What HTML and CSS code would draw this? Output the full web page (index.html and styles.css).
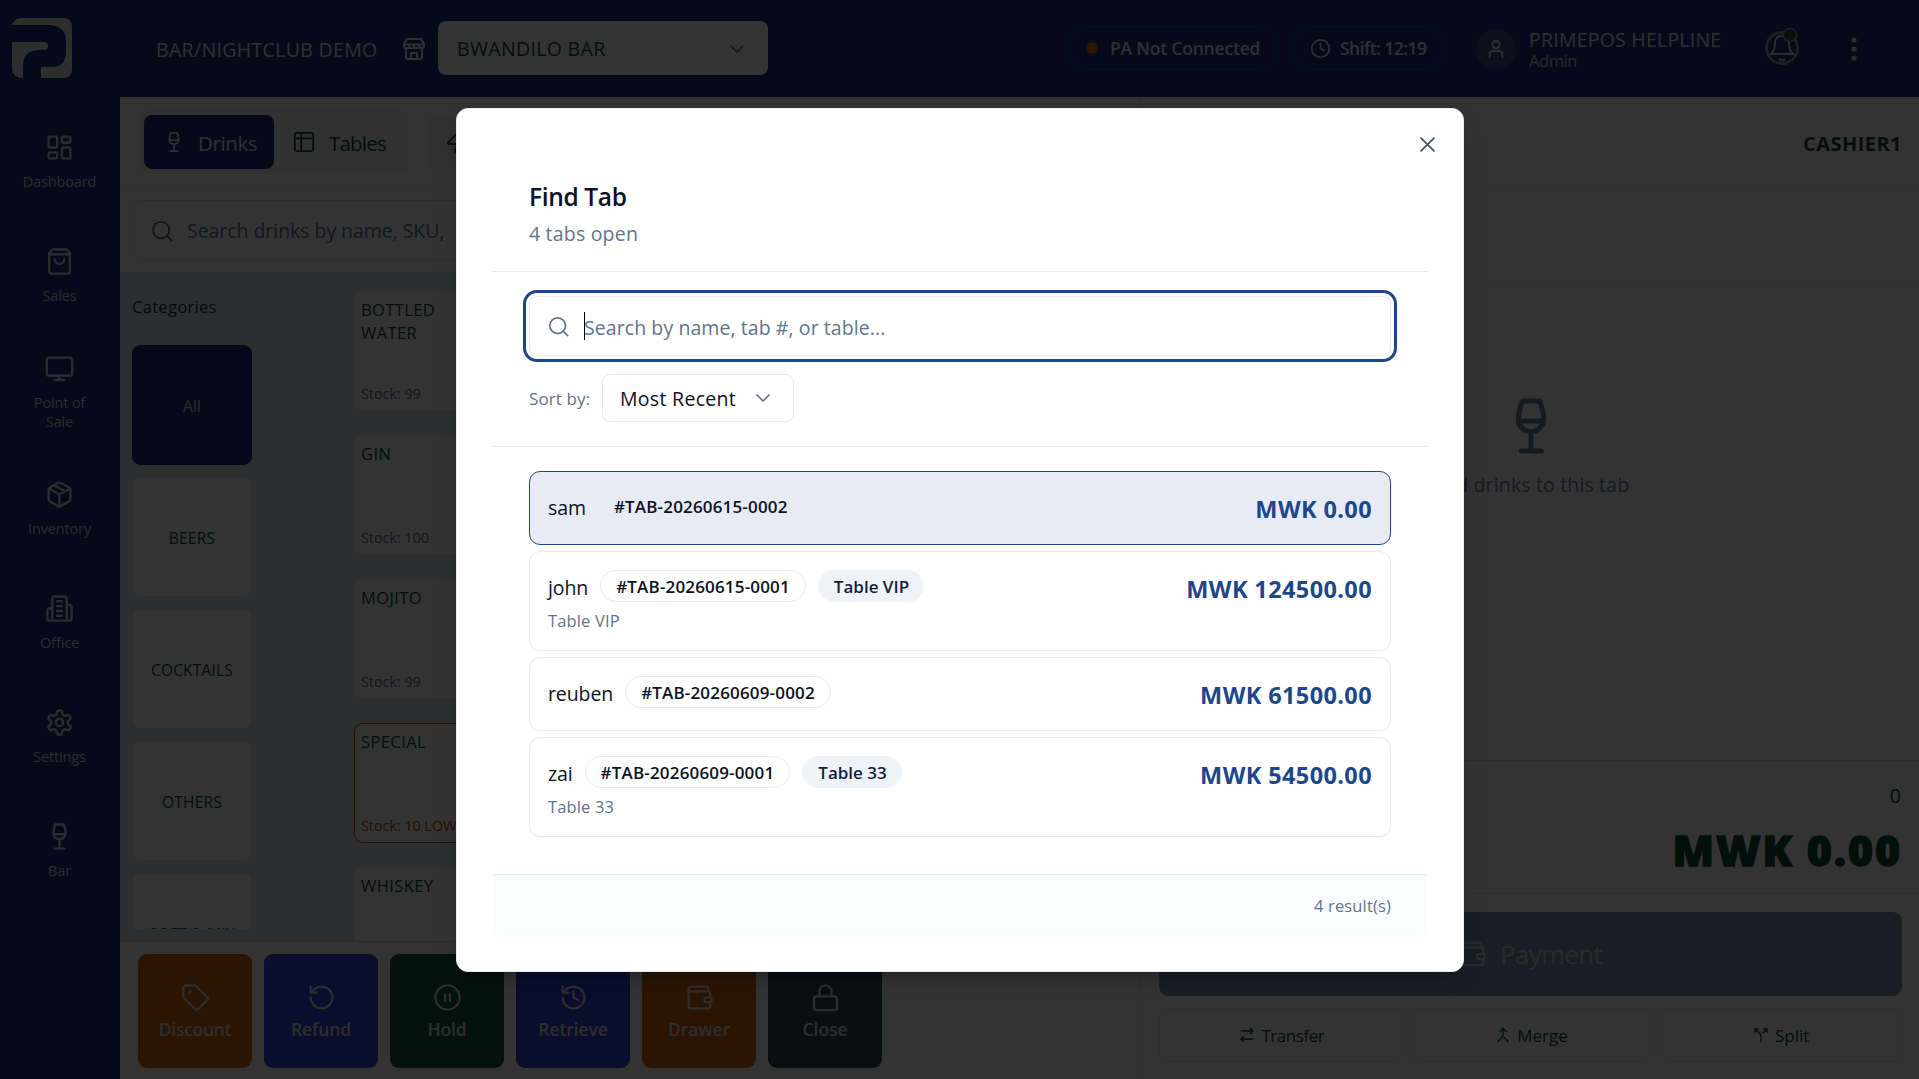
FILE: index.html
```html
<!DOCTYPE html>
<html lang="en">
<head>
<meta charset="utf-8">
<title>PrimePOS - Bar</title>
<link rel="stylesheet" href="styles.css">
</head>
<body>
<svg class="defs" width="0" height="0">
  <symbol id="glass" viewBox="0 0 24 24"><path d="M8.500 2h7c.8 2.200 1.600 5 1.600 7.200a5.100 5.100 0 0 1-10.200 0C6.900 7 7.700 4.200 8.500 2zM7 10h10M12 14.500V22M8 22h8"/></symbol>
  <symbol id="wallet" viewBox="0 0 24 24"><path d="M19 7V4a1 1 0 0 0-1-1H5a2 2 0 0 0 0 4h15a1 1 0 0 1 1 1v4h-3a2 2 0 0 0 0 4h3a1 1 0 0 0 1-1v-2a1 1 0 0 0-1-1"/><path d="M3 5v14a2 2 0 0 0 2 2h15a1 1 0 0 0 1-1v-4"/></symbol>
  <symbol id="search" viewBox="0 0 24 24"><circle cx="11" cy="11" r="9"/><path d="m22.500 22.500-5-5"/></symbol>
  <symbol id="chev" viewBox="0 0 24 24"><path d="m6 9 6 6 6-6"/></symbol>
</svg>

<div class="app">
  <header class="topbar">
    <svg class="logo" viewBox="0 0 60 60"><path d="M0 7Q3 0 9 0H51Q60 0 60 9V51Q60 60 51 60H29V49H40Q54 49 54 33V24Q54 7 36 7Z"/><path d="M0 24H31Q36 24 36 28Q36 32 31 32H26Q11 33 11 48V60Q0 60 0 49Z"/></svg>
    <span class="venue">BAR/NIGHTCLUB DEMO</span>
    <svg class="ico store" viewBox="0 0 24 24"><path d="M5 2h14l3 5v3a2 2 0 0 1-2 1H4a2 2 0 0 1-2-1V7zM2 7.500h20M4 11v9a2 2 0 0 0 2 2h12a2 2 0 0 0 2-2v-9M9 22v-6h6v6M7 8v3M12 8v3M17 8v3"/></svg>
    <div class="branch"><span>BWANDILO BAR</span><svg class="ico" viewBox="0 0 24 24"><use href="#chev"/></svg></div>
    <div class="pill pa"><i class="dot"></i><span>PA Not Connected</span></div>
    <div class="pill shift"><svg class="ico" viewBox="0 0 24 24"><circle cx="12" cy="12" r="10"/><path d="M12 6v6l4 2"/></svg><span>Shift: 12:19</span></div>
    <div class="avatar"><svg class="ico" viewBox="0 0 24 24"><circle cx="12" cy="7" r="4"/><path d="M5 21v-3a4 4 0 0 1 4-4h6a4 4 0 0 1 4 4v3"/></svg></div>
    <div class="who"><span class="who-name">PRIMEPOS HELPLINE</span><span class="who-role">Admin</span></div>
    <svg class="bell" viewBox="0 0 40 44"><circle class="ring" cx="20" cy="24" r="15.500"/><path d="M9 30Q13 26 13 19Q13 12 20 12Q27 12 27 19Q27 26 31 30ZM17 35q3 3 6 0"/><circle class="badge" cx="28" cy="11" r="6.500"/></svg>
    <svg class="kebab" viewBox="0 0 6 24"><circle cx="3" cy="3" r="2.600"/><circle cx="3" cy="12" r="2.600"/><circle cx="3" cy="21" r="2.600"/></svg>
  </header>

  <nav class="side">
    <a class="nav"><svg class="ico" viewBox="0 0 24 24"><rect x="3" y="3" width="7" height="9" rx="1"/><rect x="14" y="3" width="7" height="5" rx="1"/><rect x="14" y="12" width="7" height="9" rx="1"/><rect x="3" y="16" width="7" height="5" rx="1"/></svg><span>Dashboard</span></a>
    <a class="nav"><svg class="ico" viewBox="0 0 24 24"><path d="M3.500 5 6 2h12l2.500 3v15a2 2 0 0 1-2 2h-13a2 2 0 0 1-2-2zM3.500 6h17M16 10a4 4 0 0 1-8 0"/></svg><span>Sales</span></a>
    <a class="nav tall"><svg class="ico" viewBox="0 0 24 24"><rect x="1.500" y="3" width="21" height="15" rx="2"/><path d="M12 18v3.500M8 21.500h8"/></svg><span>Point of<br>Sale</span></a>
    <a class="nav"><svg class="ico" viewBox="0 0 24 24"><path d="M11 21.700a2 2 0 0 0 2 0l7-4A2 2 0 0 0 21 16V8a2 2 0 0 0-1-1.730l-7-4a2 2 0 0 0-2 0l-7 4A2 2 0 0 0 3 8v8a2 2 0 0 0 1 1.730zM12 22V12M3.300 7 12 12l8.700-5M7.500 4.270l9 5.150"/></svg><span>Inventory</span></a>
    <a class="nav"><svg class="ico" viewBox="0 0 24 24"><path d="M6 22V4a2 2 0 0 1 2-2h8a2 2 0 0 1 2 2v18M6 12H4a2 2 0 0 0-2 2v6a2 2 0 0 0 2 2h16a2 2 0 0 0 2-2v-9a2 2 0 0 0-2-2h-2M10 6h4M10 10h4M10 14h4M10 18h4"/></svg><span>Office</span></a>
    <a class="nav"><svg class="ico" viewBox="0 0 24 24"><path d="M12.220 2h-.44a2 2 0 0 0-2 2v.18a2 2 0 0 1-1 1.730l-.43.25a2 2 0 0 1-2 0l-.15-.08a2 2 0 0 0-2.730.73l-.22.38a2 2 0 0 0 .73 2.730l.15.1a2 2 0 0 1 1 1.720v.51a2 2 0 0 1-1 1.740l-.15.09a2 2 0 0 0-.73 2.730l.22.38a2 2 0 0 0 2.730.73l.15-.08a2 2 0 0 1 2 0l.43.25a2 2 0 0 1 1 1.730V20a2 2 0 0 0 2 2h.44a2 2 0 0 0 2-2v-.18a2 2 0 0 1 1-1.730l.43-.25a2 2 0 0 1 2 0l.15.08a2 2 0 0 0 2.730-.73l.22-.39a2 2 0 0 0-.73-2.730l-.15-.08a2 2 0 0 1-1-1.740v-.5a2 2 0 0 1 1-1.740l.15-.09a2 2 0 0 0 .73-2.730l-.22-.38a2 2 0 0 0-2.730-.73l-.15.08a2 2 0 0 1-2 0l-.43-.25a2 2 0 0 1-1-1.730V4a2 2 0 0 0-2-2z"/><circle cx="12" cy="12" r="3"/></svg><span>Settings</span></a>
    <a class="nav"><svg class="ico" viewBox="0 0 24 24"><use href="#glass"/></svg><span>Bar</span></a>
  </nav>

  <main class="work">
    <div class="tabs">
      <div class="tabgroup">
        <div class="tab on"><svg class="ico" viewBox="0 0 24 24"><use href="#glass"/></svg><span>Drinks</span></div>
        <div class="tab"><svg class="ico" viewBox="0 0 24 24"><path d="M4 2h16a2 2 0 0 1 2 2v16a2 2 0 0 1-2 2H4a2 2 0 0 1-2-2V4a2 2 0 0 1 2-2zM2 8h20M9 2v20"/></svg><span>Tables</span></div>
      </div>
      <div class="quick"><svg class="ico" viewBox="0 0 24 24"><path d="M4 14a1 1 0 0 1-.78-1.630l9.900-10.200a.5.5 0 0 1 .86.46l-1.920 6.020A1 1 0 0 0 13 10h7a1 1 0 0 1 .78 1.630l-9.900 10.200a.5.5 0 0 1-.86-.46l1.920-6.020A1 1 0 0 0 11 14z"/></svg></div>
    </div>
    <div class="finder"><div class="finder-box"><svg class="ico" viewBox="0 0 24 24"><use href="#search"/></svg><span>Search drinks by name, SKU,</span></div></div>
    <div class="browse">
      <section class="cats">
        <h2>Categories</h2>
        <div class="cat-list">
          <div class="cat on">All</div>
          <div class="cat">BEERS</div>
          <div class="cat">COCKTAILS</div>
          <div class="cat">OTHERS</div>
          <div class="cat">SOFT &amp; MIX</div>
        </div>
      </section>
      <section class="goods">
        <div class="good"><b>BOTTLED<br>WATER</b><small>Stock: 99</small></div>
        <div class="good"><b>GIN</b><small>Stock: 100</small></div>
        <div class="good"><b>MOJITO</b><small>Stock: 99</small></div>
        <div class="good low"><b>SPECIAL</b><small>Stock: 10 LOW</small></div>
        <div class="good"><b>WHISKEY</b></div>
      </section>
    </div>
    <div class="actions">
      <div class="act orange"><svg class="ico" viewBox="0 0 24 24"><path d="M12.590 2.590A2 2 0 0 0 11.170 2H4a2 2 0 0 0-2 2v7.170a2 2 0 0 0 .59 1.420l8.700 8.700a2.430 2.430 0 0 0 3.420 0l6.580-6.580a2.430 2.430 0 0 0 0-3.420z"/><circle cx="7.500" cy="7.500" r=".6"/></svg><span>Discount</span></div>
      <div class="act blue"><svg class="ico" viewBox="0 0 24 24"><path d="M3 12a9 9 0 1 0 9-9 9.750 9.750 0 0 0-6.740 2.740L3 8M3 3v5h5"/></svg><span>Refund</span></div>
      <div class="act green"><svg class="ico" viewBox="0 0 24 24"><circle cx="12" cy="12" r="10"/><path d="M10 15V9M14 15V9"/></svg><span>Hold</span></div>
      <div class="act blue"><svg class="ico" viewBox="0 0 24 24"><path d="M3 12a9 9 0 1 0 9-9 9.750 9.750 0 0 0-6.740 2.740L3 8M3 3v5h5M12 7v5l4 2"/></svg><span>Retrieve</span></div>
      <div class="act orange"><svg class="ico" viewBox="0 0 24 24"><use href="#wallet"/></svg><span>Drawer</span></div>
      <div class="act slate"><svg class="ico" viewBox="0 0 24 24"><rect x="2.500" y="11" width="19" height="11.500" rx="2"/><path d="M7 11V7a5 5 0 0 1 10 0v4"/></svg><span>Close</span></div>
    </div>
  </main>

  <aside class="cart">
    <div class="cart-head">CASHIER1</div>
    <div class="cart-sub"></div>
    <div class="cart-empty"><svg class="ico" viewBox="0 0 24 24"><use href="#glass"/></svg><span>Add drinks to this tab</span></div>
    <div class="totals"><span class="count">0</span><span class="sum">MWK 0.00</span></div>
    <div class="pay-area">
      <div class="pay"><svg class="ico" viewBox="0 0 24 24"><use href="#wallet"/></svg><span>Payment</span></div>
      <div class="ops">
        <div class="op"><svg class="ico" viewBox="0 0 24 24"><path d="m17 2 4 4-4 4M3 6h18M7 22l-4-4 4-4M21 18H3"/></svg><span>Transfer</span></div>
        <div class="op"><svg class="ico" viewBox="0 0 24 24"><path d="m7 7 5-5 5 5M12 2v10.300a4 4 0 0 1-1.200 2.900L4 22M20 22l-6-6"/></svg><span>Merge</span></div>
        <div class="op"><svg class="ico" viewBox="0 0 24 24"><path d="M16 3h5v5M8 3H3v5M12 22v-8.300a4 4 0 0 0-1.170-2.870L3 3M15 9l6-6"/></svg><span>Split</span></div>
      </div>
    </div>
  </aside>
</div>

<div class="overlay">
  <div class="modal">
    <svg class="ico close" viewBox="0 0 14 14"><path d="M1 1 13 13M13 1 1 13"/></svg>
    <div class="m-head"><h1>Find Tab</h1><p>4 tabs open</p></div>
    <div class="m-filter">
      <div class="m-search"><svg class="ico" viewBox="0 0 24 24"><use href="#search"/></svg><i class="caret"></i><span>Search by name, tab #, or table...</span></div>
      <div class="m-sort"><span class="sort-label">Sort by:</span><div class="sort-box"><span>Most Recent</span><svg class="ico" viewBox="0 0 24 24"><use href="#chev"/></svg></div></div>
    </div>
    <div class="m-list">
      <div class="row sel"><div class="row-main"><div class="line"><span class="name">sam</span><span class="tag bare">#TAB-20260615-0002</span></div></div><span class="amt">MWK 0.00</span></div>
      <div class="row"><div class="row-main"><div class="line"><span class="name">john</span><span class="tag">#TAB-20260615-0001</span><span class="tag fill">Table VIP</span></div><span class="sub">Table VIP</span></div><span class="amt">MWK 124500.00</span></div>
      <div class="row"><div class="row-main"><div class="line"><span class="name">reuben</span><span class="tag">#TAB-20260609-0002</span></div></div><span class="amt">MWK 61500.00</span></div>
      <div class="row"><div class="row-main"><div class="line"><span class="name">zai</span><span class="tag">#TAB-20260609-0001</span><span class="tag fill">Table 33</span></div><span class="sub">Table 33</span></div><span class="amt">MWK 54500.00</span></div>
    </div>
    <div class="m-foot">4 result(s)</div>
  </div>
</div>
</body>
</html>
```
FILE: styles.css
```css
* { box-sizing: border-box; margin: 0; padding: 0; }
body {
  width: 1919px; height: 1079px; overflow: hidden;
  font-family: "Open Sans", "Noto Sans", sans-serif;
  font-size: 19.5px; letter-spacing: 0.05px; color: #0f4a3a;
}
.defs { display: block; position: absolute; }
.ico { fill: none; stroke: currentColor; stroke-width: 2; stroke-linecap: round; stroke-linejoin: round; flex: none; }
span { white-space: nowrap; }

.app {
  display: grid; width: 1919px; height: 1079px;
  grid-template-columns: 120px 1020px 779px;
  grid-template-rows: 97px 982px;
  background: #fff;
}

/* top bar */
.topbar {
  grid-column: 1 / 4; display: flex; align-items: center;
  background: #193282; color: #e6e9f0;
}
.logo { width: 60px; height: 60px; margin: -1px 0 0 12px; fill: #e6e6e6; }
.venue { width: 228px; margin-left: 84px; padding-top: 1px; letter-spacing: 0.33px; }
.store { width: 24px; height: 24px; margin-left: 18px; }
.branch {
  display: flex; align-items: center; justify-content: space-between;
  width: 330px; height: 54px; margin: -1px 0 0 12px; padding: 1px 19px 0 19px;
  border-radius: 8px; background: #fff; color: #0f4a3a; letter-spacing: 0.33px;
}
.branch .ico { width: 24px; height: 24px; color: #64748b; stroke-width: 1.7; }
.pill {
  display: flex; align-items: center; height: 44px; margin-top: -1px;
  border: 1px solid #2846b4; border-radius: 22px;
  font-size: 17.5px; font-weight: 600;
}
.pa { width: 212px; margin-left: 299px; padding-left: 18px; gap: 12px; letter-spacing: -0.2px; }
.dot { width: 12px; height: 12px; border-radius: 50%; background: #e6640a; }
.shift { width: 153px; margin-left: 12px; padding-left: 18px; gap: 9px; letter-spacing: -0.55px; }
.shift .ico { width: 21px; height: 21px; }
.avatar {
  display: flex; align-items: center; justify-content: center;
  width: 40px; height: 40px; margin-left: 32px; border-radius: 50%; background: #3c5090;
}
.avatar .ico { width: 22px; height: 24px; }
.who { display: flex; flex-direction: column; width: 215px; margin-left: 13px; }
.who-name { line-height: 24px; letter-spacing: 0.23px; }
.who-role { font-size: 16.5px; line-height: 18px; color: #c8cddc; letter-spacing: -0.4px; }
.bell { width: 40px; height: 44px; margin-left: 18px; fill: none; stroke: #dcdcdc; stroke-width: 2; margin-top: -6px; }
.bell .ring { stroke: #8c96aa; stroke-width: 3; }
.bell .badge { fill: #14553c; stroke: #8c9696; stroke-width: 1.5; }
.kebab { width: 6px; height: 24px; margin-left: 49px; fill: #dcdcdc; }

/* sidebar */
.side {
  display: flex; flex-direction: column; gap: 10px; padding: 13px 1px 0 0;
  background: #193282; color: #d2d7e6;
}
.nav {
  display: flex; flex-direction: column; align-items: center; justify-content: center;
  gap: 10px; height: 104px; font-size: 14.5px; line-height: 19px; text-align: center; letter-spacing: -0.01em;
}
.nav.tall { height: 109px; }
.nav .ico { width: 29px; height: 29px; }

/* work area */
.work { display: flex; flex-direction: column; overflow: hidden; background: #fff; }
.work > * { flex: none; }
.tabs { display: flex; height: 91px; padding: 13px 0 0 19px; border-bottom: 1px solid #e6e8ec; }
.tabgroup { display: flex; width: 270px; height: 64px; padding: 5px; border-radius: 10px; background: #f5f6f8; }
.tab { display: flex; align-items: center; gap: 14px; height: 54px; padding: 0 0 0 19px; font-size: 20.5px; letter-spacing: -0.8px; }
.tab span { padding-top: 2px; }
.tab .ico { width: 22px; height: 22px; }
.tab.on { width: 130px; gap: 13px; border-radius: 8px; background: #193282; color: #e6e9f0; letter-spacing: -0.4px; }
.quick { width: 330px; height: 54px; margin: 5px 0 0 18px; padding: 15px 18px; border-radius: 8px; background: #f2f4f6; }
.quick .ico { width: 24px; height: 24px; }
.finder { height: 84px; padding: 12px; }
.finder-box {
  display: flex; align-items: center; gap: 14px; height: 60px; padding: 1px 0 0 18px;
  border: 1px solid #e4e7ec; border-radius: 8px; color: #64748b; letter-spacing: -0.05px;
}
.finder-box .ico { width: 22px; height: 22px; }
.browse { display: flex; height: 670px; background: #e1e6eb; border-bottom: 1px solid #d8dce2; }
.cats { width: 222px; height: 657px; padding-left: 12px; overflow: hidden; }
.cats h2 { height: 73px; padding-top: 23px; font-size: 16.5px; font-weight: 400; line-height: 24px; color: #1e2d3c; letter-spacing: 0.3px; }
.cat-list { display: flex; flex-direction: column; gap: 12px; width: 120px; }
.cat {
  display: flex; align-items: center; justify-content: center; flex: none;
  height: 120px; padding-top: 2px; border: 1px solid #e8ebef; border-radius: 8px; background: #fff; font-size: 15.5px; letter-spacing: 0.2px;
}
.cat.on { background: #193282; border-color: #193282; color: #d2d7e6; }
.goods { display: flex; flex-direction: column; gap: 24px; width: 330px; height: 669px; padding: 19px 0 0 12px; overflow: hidden; }
.good {
  display: flex; flex-direction: column; justify-content: space-between; flex: none;
  height: 120px; padding: 6px; border: 1px solid #f0f2f5; border-radius: 9px; background: #fff;
}
.good b { font-size: 16.5px; font-weight: 400; line-height: 23px; letter-spacing: 0.4px; }
.good small { font-size: 14.5px; line-height: 20px; color: #64748b; letter-spacing: -0.1px; }
.good.low { border-color: #c8500a; }
.good.low small { color: #c8500a; }
.actions { display: flex; gap: 12px; padding: 12px 18px; }
.act {
  display: flex; flex-direction: column; align-items: center; gap: 5px;
  width: 114px; height: 114px; padding-top: 29px; border-radius: 9px;
  font-size: 17.5px; font-weight: 600; line-height: 24px; color: #e0e0e0; letter-spacing: -0.1px;
}
.act .ico { width: 29px; height: 29px; stroke-width: 1.8; }
.act:first-child { letter-spacing: -0.3px; }
.orange { background: #dc640a; }
.blue { background: #2846dc; }
.green { background: #145541; }
.slate { background: #284b5a; }

/* cart */
.cart { display: flex; flex-direction: column; border-left: 1px solid #e6e8ec; background: #fff; }
.cart-head {
  height: 91px; padding: 32px 17px 0 0; border-bottom: 1px solid #e6e8ec;
  font-size: 20px; font-weight: 700; line-height: 30px; text-align: right; letter-spacing: 0.45px;
}
.cart-sub { height: 97px; border-bottom: 1px solid #e6e8ec; }
.cart-empty { display: flex; flex-direction: column; align-items: center; gap: 13px; height: 475px; padding: 109px 0 0 1px; color: #707fa0; letter-spacing: 0.15px; }
.cart-empty .ico { width: 60px; height: 64px; }
.totals {
  display: flex; flex-direction: column; align-items: flex-end; height: 134px;
  padding: 19px 18px 0 0; border-top: 1px solid #e0e3e8; border-bottom: 1px solid #e6e8ec;
}
.count { line-height: 32px; }
.sum {
  margin: 9px -1px 0 0; font-size: 43px; font-weight: 800; line-height: 58px;
  letter-spacing: 1.8px; -webkit-text-stroke: 1.3px currentColor;
}
.pay-area { padding: 18px 17px 0 18px; }
.pay {
  display: flex; align-items: center; justify-content: center; gap: 13px;
  height: 84px; padding-right: 2px; border-radius: 9px; background: #8291be; color: #d2d2d2; font-size: 26px; letter-spacing: -0.7px;
}
.pay .ico { width: 30px; height: 30px; }
.ops { display: flex; gap: 8px; margin-top: 12px; }
.op {
  display: flex; align-items: center; justify-content: center; flex: 1; gap: 6px;
  height: 54px; border: 1px solid #e6e8ec; border-radius: 8px; font-size: 17px; letter-spacing: 0;
}
.op .ico { width: 16px; height: 16px; }
.op:first-child { letter-spacing: -0.45px; padding-left: 2px; }

/* dialog */
.overlay {
  position: absolute; inset: 0; display: flex; align-items: center; justify-content: center;
  background: rgba(0, 0, 0, .8);
}
.modal {
  position: relative; width: 1008px; height: 864px; padding: 36px; margin: 1px 0 0 1px;
  border: 1px solid #e6ebf3; border-radius: 12px; background: #fff; color: #0b1223;
  box-shadow: 0 10px 24px -8px rgba(0, 0, 0, .4);
}
.close { position: absolute; top: 28px; right: 28px; width: 15px; height: 15px; stroke-width: 1.7; color: #475569; }
.m-head { height: 127px; padding: 35px 36px 0; border-bottom: 1px solid #e6eaf2; }
.m-head h1 { font-size: 24.5px; font-weight: 600; line-height: 34px; letter-spacing: -0.35px; }
.m-head p { margin-top: 5px; line-height: 30px; color: #64748b; letter-spacing: 0.2px; }
.m-filter { height: 175px; padding: 24px 36px 0; border-bottom: 1px solid #e6eaf2; }
.m-search {
  display: flex; align-items: center; height: 60px; padding-left: 18px;
  border: 1px solid #e6eaf2; border-radius: 8px; outline: 3px solid #1e478a; outline-offset: 3px; color: #64748b;
}
.m-search .ico { width: 21px; height: 21px; }
.m-search span { padding-top: 2px; margin-left: -1px; letter-spacing: 0.08px; }
.caret { width: 1px; height: 28px; margin-left: 15px; background: #000; }
.m-sort { display: flex; align-items: center; gap: 12px; margin-top: 18px; }
.sort-label { width: 61px; font-size: 17px; letter-spacing: 0.1px; color: #64748b; }
.sort-box {
  display: flex; align-items: center; justify-content: space-between; width: 192px; height: 48px;
  padding: 0 18px 0 17px; border: 1px solid #e6eaf2; border-radius: 8px; letter-spacing: 0.3px;
}
.sort-box span { padding-top: 1px; }
.sort-box .ico { width: 24px; height: 24px; color: #64748b; stroke-width: 1.7; }
.m-list { display: flex; flex-direction: column; gap: 6px; height: 427px; padding: 24px 36px 0; }
.row {
  display: flex; justify-content: space-between; height: 100px; padding: 18px;
  border: 1px solid #e6eaf2; border-radius: 11px;
}
.row:nth-child(odd) { height: 74px; }
.row.sel { border-color: #1e478a; background: #e7ebf4; }
.line { display: flex; align-items: center; height: 32px; gap: 12px; }
.name { line-height: 32px; padding-top: 3px; letter-spacing: -0.1px; }
.tag {
  height: 32px; padding: 0 15px; border: 1px solid #e6eaf2; border-radius: 16px;
  font-size: 17px; font-weight: 600; line-height: 31px; letter-spacing: 0.17px;
}
.tag.bare { border-color: transparent; }
.tag.fill { background: #eff2f8; border-color: #eff2f8; color: #151d38; padding: 0 14px 0 15px; letter-spacing: 0; }
.sub { display: block; margin-top: 7px; font-size: 16.5px; line-height: 24px; color: #64748b; letter-spacing: 0.15px; }
.amt { font-size: 23.5px; font-weight: 700; line-height: 38px; color: #1e478a; letter-spacing: 0.38px; }
.m-foot {
  height: 61px; padding-right: 36px; border-top: 1px solid #e6eaf2; background: #fbfcfe;
  font-size: 16.5px; line-height: 61px; text-align: right; color: #64748b; letter-spacing: 0.15px;
}
```
